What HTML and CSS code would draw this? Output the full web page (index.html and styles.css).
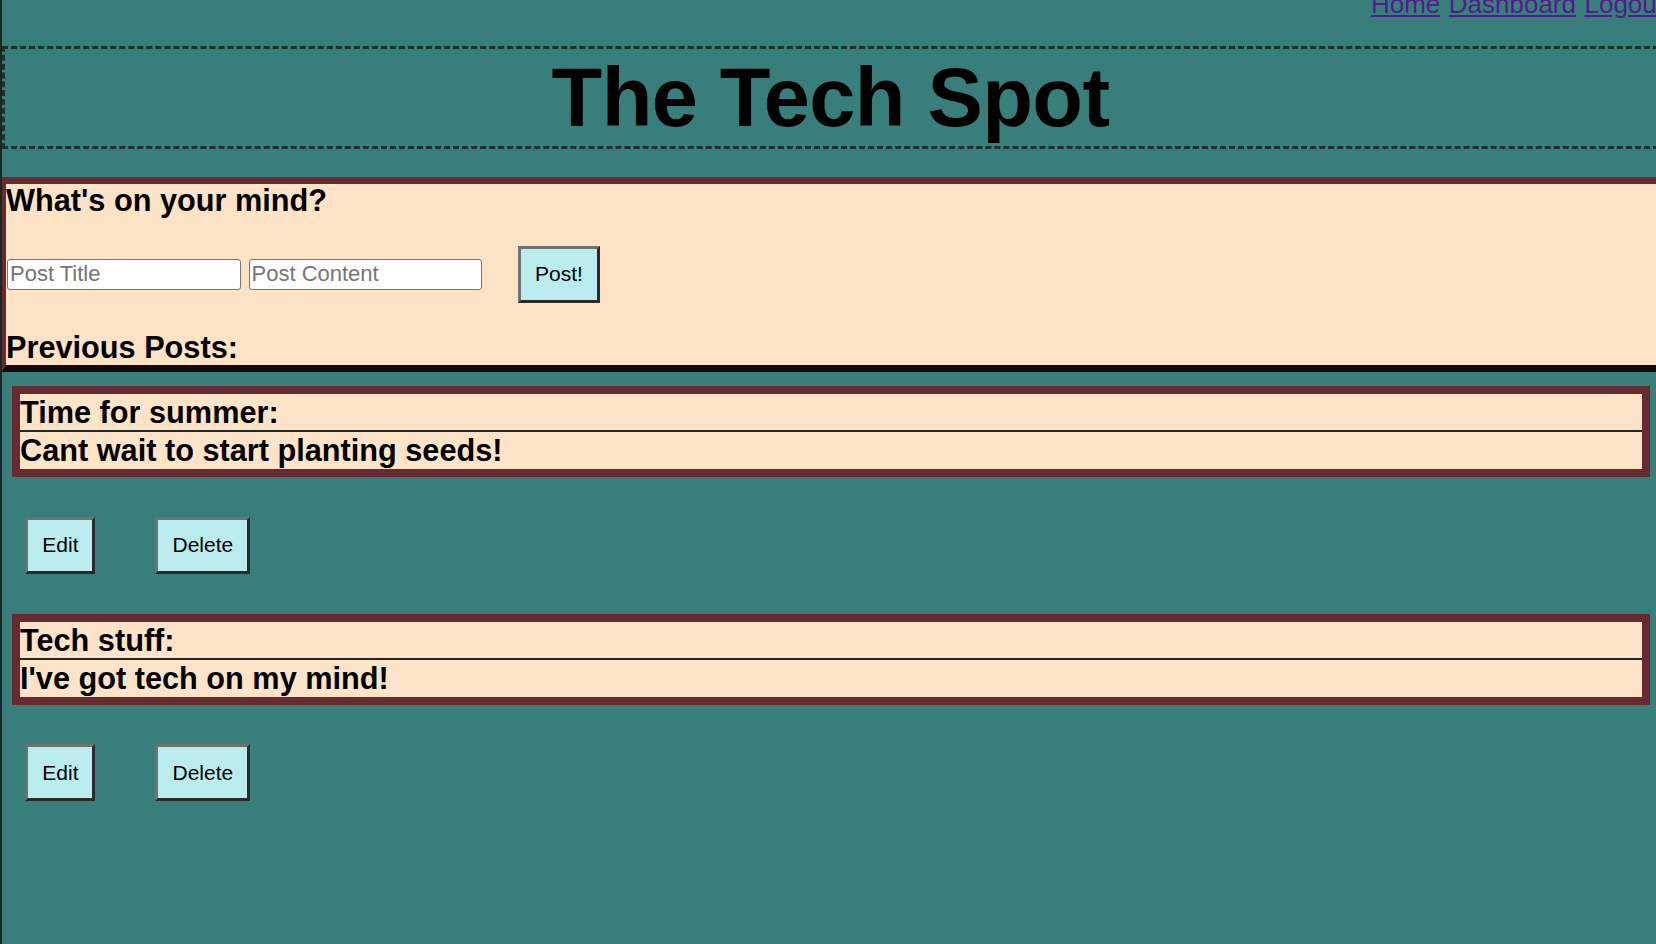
FILE: index.html
```html
<!DOCTYPE html>
<html lang="en">
<head>
<meta charset="utf-8">
<title>The Tech Spot</title>
<link rel="stylesheet" href="styles.css">
</head>
<body>
<div class="page">
  <nav class="nav">
    <a href="#" class="nav-link">Home</a>
    <a href="#" class="nav-link">Dashboard</a>
    <a href="#" class="nav-link">Logout</a>
  </nav>
  <header class="header">
    <h1 class="site-title">The Tech Spot</h1>
  </header>
  <section class="compose">
    <h2 class="compose-heading">What's on your mind?</h2>
    <form class="compose-row">
      <input class="field" type="text" placeholder="Post Title">
      <input class="field" type="text" placeholder="Post Content">
      <button class="btn btn-post" type="button">Post!</button>
    </form>
    <h2 class="compose-heading">Previous Posts:</h2>
  </section>
  <article class="post">
    <h3 class="post-title">Time for summer:</h3>
    <p class="post-body">Cant wait to start planting seeds!</p>
  </article>
  <div class="post-actions">
    <button class="btn" type="button">Edit</button>
    <button class="btn" type="button">Delete</button>
  </div>
  <article class="post">
    <h3 class="post-title">Tech stuff:</h3>
    <p class="post-body">I've got tech on my mind!</p>
  </article>
  <div class="post-actions">
    <button class="btn" type="button">Edit</button>
    <button class="btn" type="button">Delete</button>
  </div>
</div>
</body>
</html>
```
FILE: styles.css
```css
html {
  overflow: hidden;
  background: #387f7c;
}
body {
  margin: 0;
  background: #387f7c;
  font-family: "Liberation Sans", Arial, Helvetica, sans-serif;
  color: #000;
  min-height: 944px;
}
.page {
  width: 1658px;
  min-height: 944px;
  border-left: 2px solid #1c2626;
  display: flex;
  flex-direction: column;
}
.nav {
  display: flex;
  justify-content: flex-end;
  gap: 8.5px;
  margin-top: -11.5px;
  margin-right: -4px;
  font-size: 26px;
  line-height: normal;
}
.nav-link {
  color: #551a8b;
  text-decoration: underline;
}
.header {
  margin-top: 26px;
  margin-right: 1px;
  border: 3px dashed #22302b;
  padding-top: 1px;
  text-align: center;
}
.site-title {
  margin: 0;
  font-size: 83px;
  letter-spacing: -0.6px;
  font-weight: bold;
  line-height: normal;
}
.compose {
  margin-top: 28.5px;
  margin-right: -30px;
  background: #fce3c6;
  border-style: solid;
  border-width: 7px 7px 7px 4px;
  border-color: #672a31 #150809 #150809 #672a31;
  display: flex;
  flex-direction: column;
  gap: 28px;
}
.compose-heading {
  margin: 0;
  font-size: 30.7px;
  font-weight: bold;
  line-height: 34.5px;
}
.compose-row {
  margin: -1px 0 0 1px;
  display: flex;
  align-items: center;
}
.field {
  box-sizing: border-box;
  width: 233.5px;
  height: 31px;
  margin-right: 8px;
  padding: 1px 2px;
  border: 1px solid #767676;
  border-radius: 3px;
  background: #fff;
  font-family: "Liberation Sans", Arial, Helvetica, sans-serif;
  font-size: 22px;
  color: #000;
}
.field::placeholder {
  color: #757575;
}
.field + .field {
  margin-right: 36px;
}
.btn {
  font-family: "Liberation Sans", Arial, Helvetica, sans-serif;
  font-size: 21px;
  line-height: normal;
  padding: 13.5px 14px;
  background: #bbeced;
  color: #000;
  border-style: solid;
  border-width: 3px;
  border-color: #707070 #2a2a2a #2a2a2a #707070;
  border-radius: 0;
}
.post {
  margin: 14px 10px 0 10px;
  border: 8px solid #672a31;
  background: #fde4c8;
}
.post + .post-actions + .post {
  margin-top: 40px;
}
.post-title {
  margin: 0;
  padding-top: 2px;
  font-size: 30.7px;
  font-weight: bold;
  line-height: 34px;
  border-bottom: 2px solid #1f2c28;
}
.post-body {
  margin: 0;
  padding: 2px 0 1px;
  font-size: 30.7px;
  font-weight: bold;
  line-height: 34px;
}
.post-actions {
  margin-top: 39.5px;
  padding-left: 23.3px;
  display: flex;
  gap: 60px;
}
```
